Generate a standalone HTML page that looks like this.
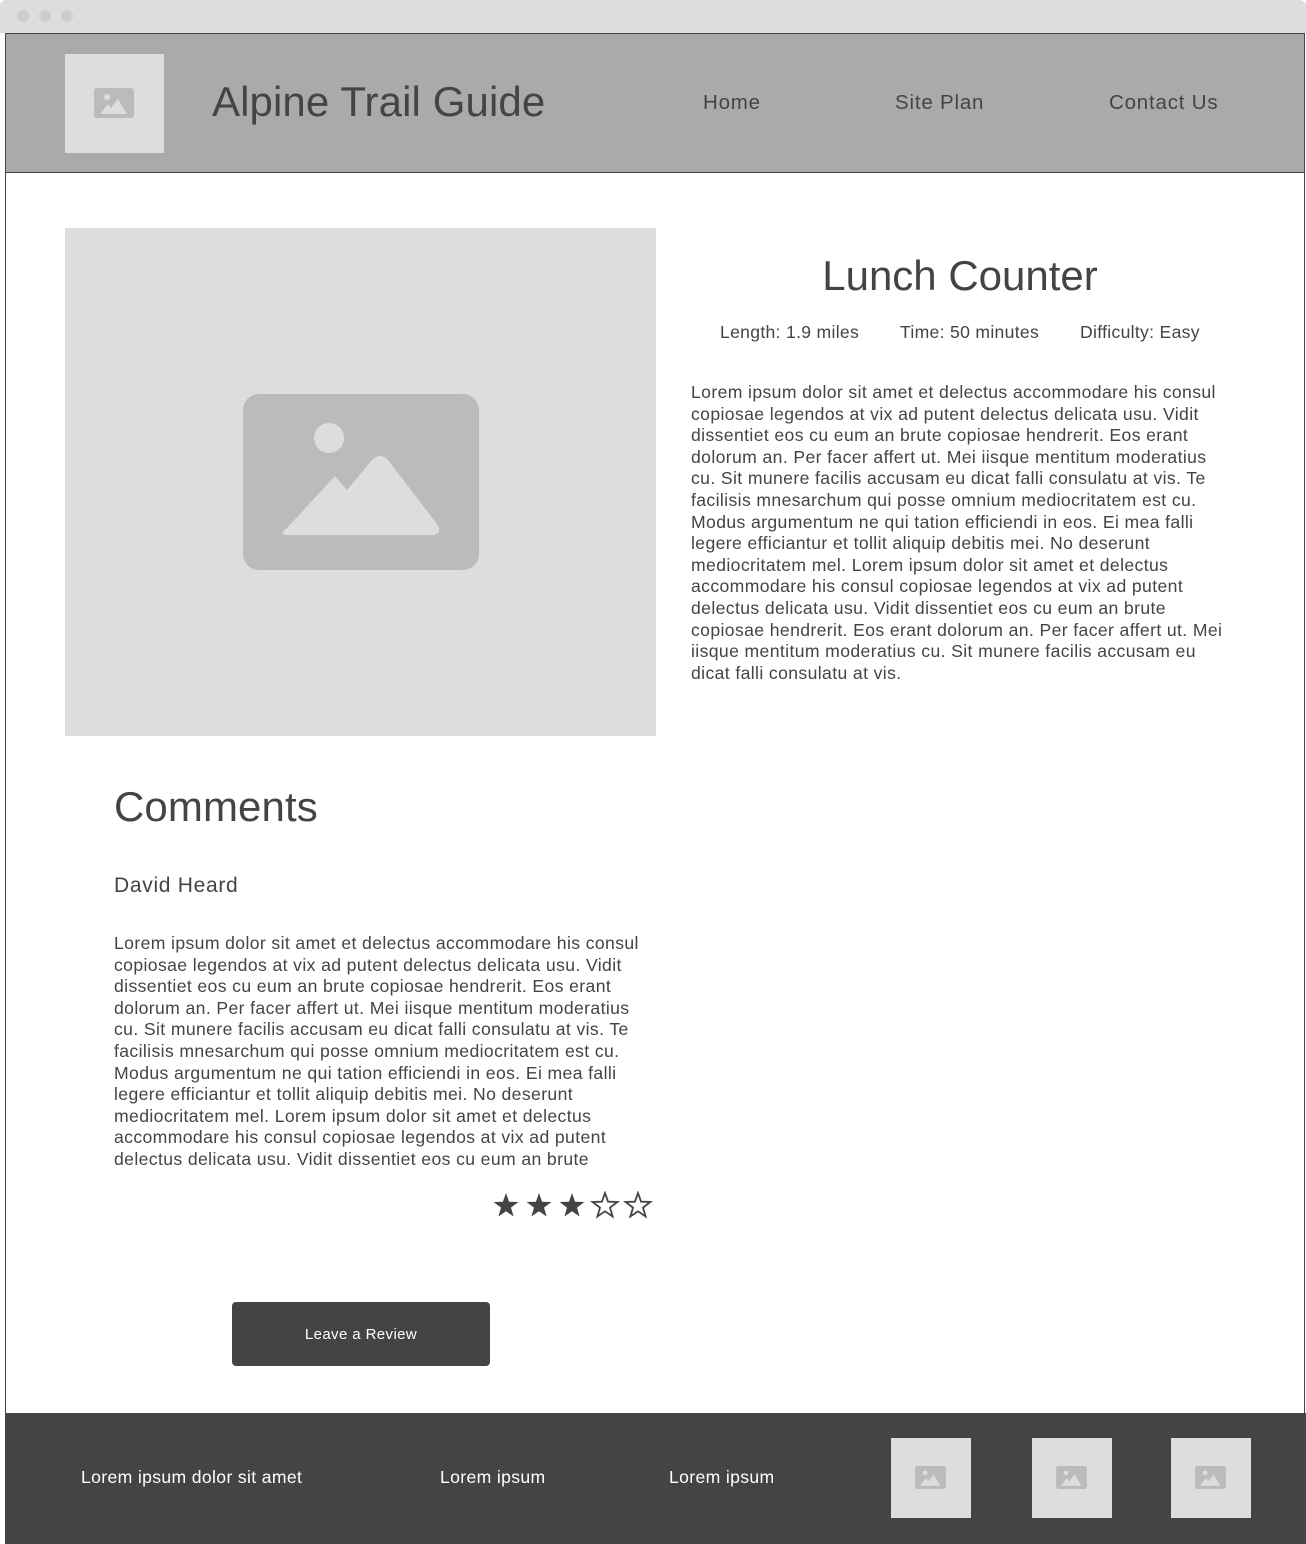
<!DOCTYPE html>
<html><head><style>
*{margin:0;padding:0;box-sizing:border-box}
body{width:1306px;height:1544px;background:#fff;font-family:"Liberation Sans",sans-serif;color:#444;position:relative;overflow:hidden}
.a{position:absolute}
.dot{position:absolute;top:10px;width:12px;height:12px;border-radius:50%;background:#ccc}
p.t{font-size:17.6px;line-height:21.6px;color:#444;letter-spacing:0.38px}
.nav{font-size:20.5px;letter-spacing:0.8px}
.m{font-size:17.6px;letter-spacing:0.3px}
</style></head><body>
<div class="a" style="left:0;top:0;width:1306px;height:33px;background:#ddd;border-radius:6px 6px 0 0"></div>
<div class="dot" style="left:17px"></div><div class="dot" style="left:39px"></div><div class="dot" style="left:61px"></div>
<div class="a" style="left:5px;top:33px;width:1300px;height:1511px;border:1px solid #444;border-bottom:none"></div>
<div class="a" style="left:5px;top:33px;width:1300px;height:140px;background:#aaa;border:1px solid #444"></div>
<div class="a" style="left:65px;top:54px;width:99px;height:99px;background:#ddd"></div>
<svg class="a" style="left:94px;top:88px" width="40" height="32" viewBox="0 0 40 32"><rect width="40" height="30" rx="3" fill="#bbb"/><circle cx="13" cy="9" r="3" fill="#ddd"/><path d="M6 26 L14 16 L17 20 L24 11 L33 26 Z" fill="#ddd"/></svg>
<div class="a" style="left:212px;top:78px;font-size:42px;letter-spacing:0.1px">Alpine Trail Guide</div>
<div class="a nav" style="left:703px;top:91px">Home</div>
<div class="a nav" style="left:895px;top:91px">Site Plan</div>
<div class="a nav" style="left:1109px;top:91px">Contact Us</div>

<div class="a" style="left:65px;top:228px;width:591px;height:508px;background:#ddd"></div>
<svg class="a" style="left:243px;top:394px" width="236" height="176" viewBox="0 0 236 176"><rect width="236" height="176" rx="16" fill="#bbb"/><circle cx="86" cy="44" r="15" fill="#ddd"/><path d="M44 134 Q36 140 42 141 L190 141 Q200 140 194 130 L145 66 Q137 58 129 66 L104 96 L92 82 Z" fill="#ddd"/></svg>

<div class="a" style="left:690px;top:252px;width:540px;text-align:center;font-size:42px">Lunch Counter</div>
<div class="a m" style="left:720px;top:322px">Length: 1.9 miles</div>
<div class="a m" style="left:900px;top:322px">Time: 50 minutes</div>
<div class="a m" style="left:1080px;top:322px">Difficulty: Easy</div>
<p class="a t" style="left:691px;top:382px;width:540px">Lorem ipsum dolor sit amet et delectus accommodare his consul copiosae legendos at vix ad putent delectus delicata usu. Vidit dissentiet eos cu eum an brute copiosae hendrerit. Eos erant dolorum an. Per facer affert ut. Mei iisque mentitum moderatius cu. Sit munere facilis accusam eu dicat falli consulatu at vis. Te facilisis mnesarchum qui posse omnium mediocritatem est cu. Modus argumentum ne qui tation efficiendi in eos. Ei mea falli legere efficiantur et tollit aliquip debitis mei. No deserunt mediocritatem mel. Lorem ipsum dolor sit amet et delectus accommodare his consul copiosae legendos at vix ad putent delectus delicata usu. Vidit dissentiet eos cu eum an brute copiosae hendrerit. Eos erant dolorum an. Per facer affert ut. Mei iisque mentitum moderatius cu. Sit munere facilis accusam eu dicat falli consulatu at vis.</p>

<div class="a" style="left:114px;top:783px;font-size:42px;letter-spacing:0.1px">Comments</div>
<div class="a" style="left:114px;top:874px;font-size:21px;letter-spacing:0.7px">David Heard</div>
<p class="a t" style="left:114px;top:933px;width:535px">Lorem ipsum dolor sit amet et delectus accommodare his consul copiosae legendos at vix ad putent delectus delicata usu. Vidit dissentiet eos cu eum an brute copiosae hendrerit. Eos erant dolorum an. Per facer affert ut. Mei iisque mentitum moderatius cu. Sit munere facilis accusam eu dicat falli consulatu at vis. Te facilisis mnesarchum qui posse omnium mediocritatem est cu. Modus argumentum ne qui tation efficiendi in eos. Ei mea falli legere efficiantur et tollit aliquip debitis mei. No deserunt mediocritatem mel. Lorem ipsum dolor sit amet et delectus accommodare his consul copiosae legendos at vix ad putent delectus delicata usu. Vidit dissentiet eos cu eum an brute</p>
<svg class="a" style="left:490px;top:1191px" width="165" height="30" viewBox="0 0 165 30">
<defs><path id="s" d="M0 -13 L3.1 -4.3 L12.4 -4 L5 1.6 L7.6 10.5 L0 5.3 L-7.6 10.5 L-5 1.6 L-12.4 -4 L-3.1 -4.3 Z"/></defs>
<use href="#s" x="16" y="15" fill="#444"/>
<use href="#s" x="49" y="15" fill="#444"/>
<use href="#s" x="82" y="15" fill="#444"/>
<use href="#s" x="115" y="15" fill="none" stroke="#444" stroke-width="1.8"/>
<use href="#s" x="148" y="15" fill="none" stroke="#444" stroke-width="1.8"/>
</svg>

<div class="a" style="left:232px;top:1302px;width:258px;height:64px;background:#444;border-radius:4px;color:#fff;font-size:15px;letter-spacing:0.4px;text-align:center;line-height:66px">Leave a Review</div>

<div class="a" style="left:5px;top:1413px;width:1301px;height:131px;background:#444"></div>
<div class="a m" style="left:81px;top:1467px;color:#fff;letter-spacing:0.35px">Lorem ipsum dolor sit amet</div>
<div class="a m" style="left:440px;top:1467px;color:#fff;letter-spacing:0.35px">Lorem ipsum</div>
<div class="a m" style="left:669px;top:1467px;color:#fff;letter-spacing:0.35px">Lorem ipsum</div>
<div class="a" style="left:891px;top:1438px;width:80px;height:80px;background:#ddd"></div>
<div class="a" style="left:1032px;top:1438px;width:80px;height:80px;background:#ddd"></div>
<div class="a" style="left:1171px;top:1438px;width:80px;height:80px;background:#ddd"></div>
<svg class="a" style="left:915px;top:1466px" width="31" height="23" viewBox="0 0 40 30"><rect width="40" height="30" rx="3" fill="#bbb"/><circle cx="13" cy="9" r="3" fill="#ddd"/><path d="M6 26 L14 16 L17 20 L24 11 L33 26 Z" fill="#ddd"/></svg>
<svg class="a" style="left:1056px;top:1466px" width="31" height="23" viewBox="0 0 40 30"><rect width="40" height="30" rx="3" fill="#bbb"/><circle cx="13" cy="9" r="3" fill="#ddd"/><path d="M6 26 L14 16 L17 20 L24 11 L33 26 Z" fill="#ddd"/></svg>
<svg class="a" style="left:1195px;top:1466px" width="31" height="23" viewBox="0 0 40 30"><rect width="40" height="30" rx="3" fill="#bbb"/><circle cx="13" cy="9" r="3" fill="#ddd"/><path d="M6 26 L14 16 L17 20 L24 11 L33 26 Z" fill="#ddd"/></svg>
</body></html>
